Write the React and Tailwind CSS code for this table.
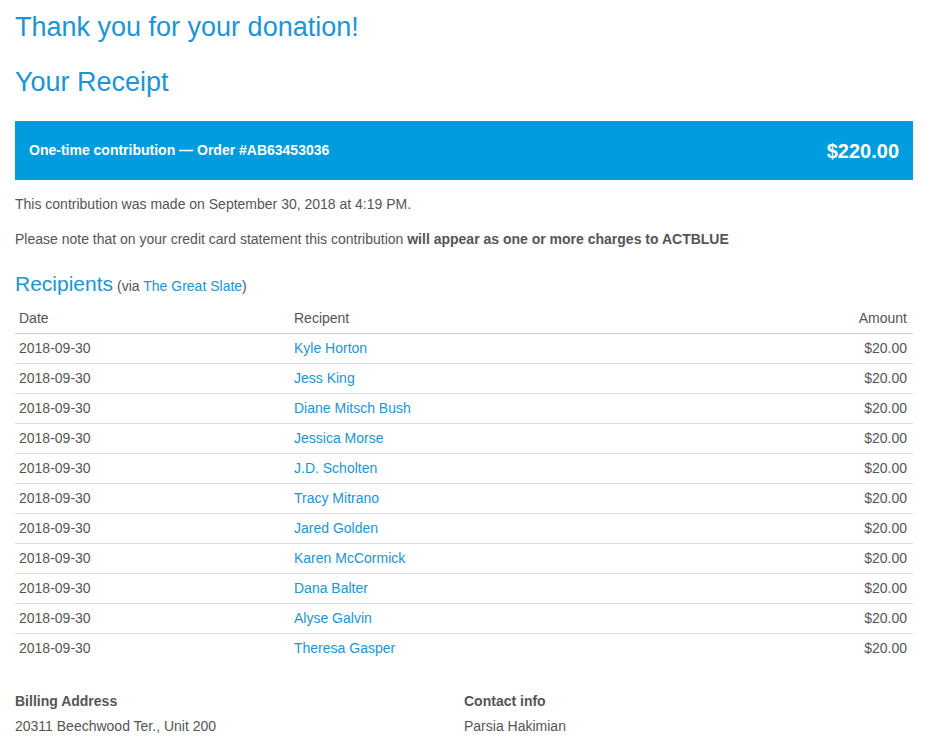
const rows = [
  'Kyle Horton',
  'Jess King',
  'Diane Mitsch Bush',
  'Jessica Morse',
  'J.D. Scholten',
  'Tracy Mitrano',
  'Jared Golden',
  'Karen McCormick',
  'Dana Balter',
  'Alyse Galvin',
  'Theresa Gasper',
]

export default function App() {
  return (
    <div
      className="min-h-screen bg-white px-[15px] text-[14px] text-[#555]"
      style={{ fontFamily: '"Liberation Sans", Arial, sans-serif' }}
    >
      <h1 className="pt-[10px] text-[27px] leading-[34px] text-[#1b95d5]">Thank you for your donation!</h1>
      <h2 className="mt-[21px] text-[27px] leading-[34px] text-[#1b95d5]">Your Receipt</h2>

      <div className="mt-[22px] w-[898px] h-[59px] bg-[#009cde] flex items-center justify-between pl-[14px] pr-[14px] text-white font-bold">
        <span className="text-[14px]">One-time contribution — Order #AB63453036</span>
        <span className="text-[20px]">$220.00</span>
      </div>

      <p className="mt-[14px] leading-[20px]">This contribution was made on September 30, 2018 at 4:19 PM.</p>
      <p className="mt-[15px] leading-[20px]">
        Please note that on your credit card statement this contribution{' '}
        <b>will appear as one or more charges to ACTBLUE</b>
      </p>

      <div className="mt-[22px] flex items-baseline">
        <span className="text-[21px] leading-[26px] text-[#1b95d5]">Recipients</span>
        <span className="ml-[4px]">
          (via <a className="text-[#1b95d5]">The Great Slate</a>)
        </span>
      </div>

      <table className="mt-[6px] w-[898px] border-collapse">
        <thead>
          <tr className="border-b border-[#ccc]">
            <th className="text-left font-normal pl-[4px] pt-[2px] h-[30px] w-[279px]">Date</th>
            <th className="text-left font-normal pt-[2px]">Recipent</th>
            <th className="text-right font-normal pr-[6px] pt-[2px]">Amount</th>
          </tr>
        </thead>
        <tbody>
          {rows.map((name, i) => (
            <tr key={name} className={i < rows.length - 1 ? 'border-b border-[#ddd]' : ''}>
              <td className="pl-[4px] h-[30px]">2018-09-30</td>
              <td className="text-[#1b95d5]">{name}</td>
              <td className="text-right pr-[6px]">$20.00</td>
            </tr>
          ))}
        </tbody>
      </table>

      <div className="mt-[28px] grid grid-cols-2 w-[898px]">
        <div>
          <div className="font-bold leading-[20px]">Billing Address</div>
          <div className="mt-[5px] leading-[20px]">20311 Beechwood Ter., Unit 200</div>
        </div>
        <div>
          <div className="font-bold leading-[20px]">Contact info</div>
          <div className="mt-[5px] leading-[20px]">Parsia Hakimian</div>
        </div>
      </div>
    </div>
  )
}
